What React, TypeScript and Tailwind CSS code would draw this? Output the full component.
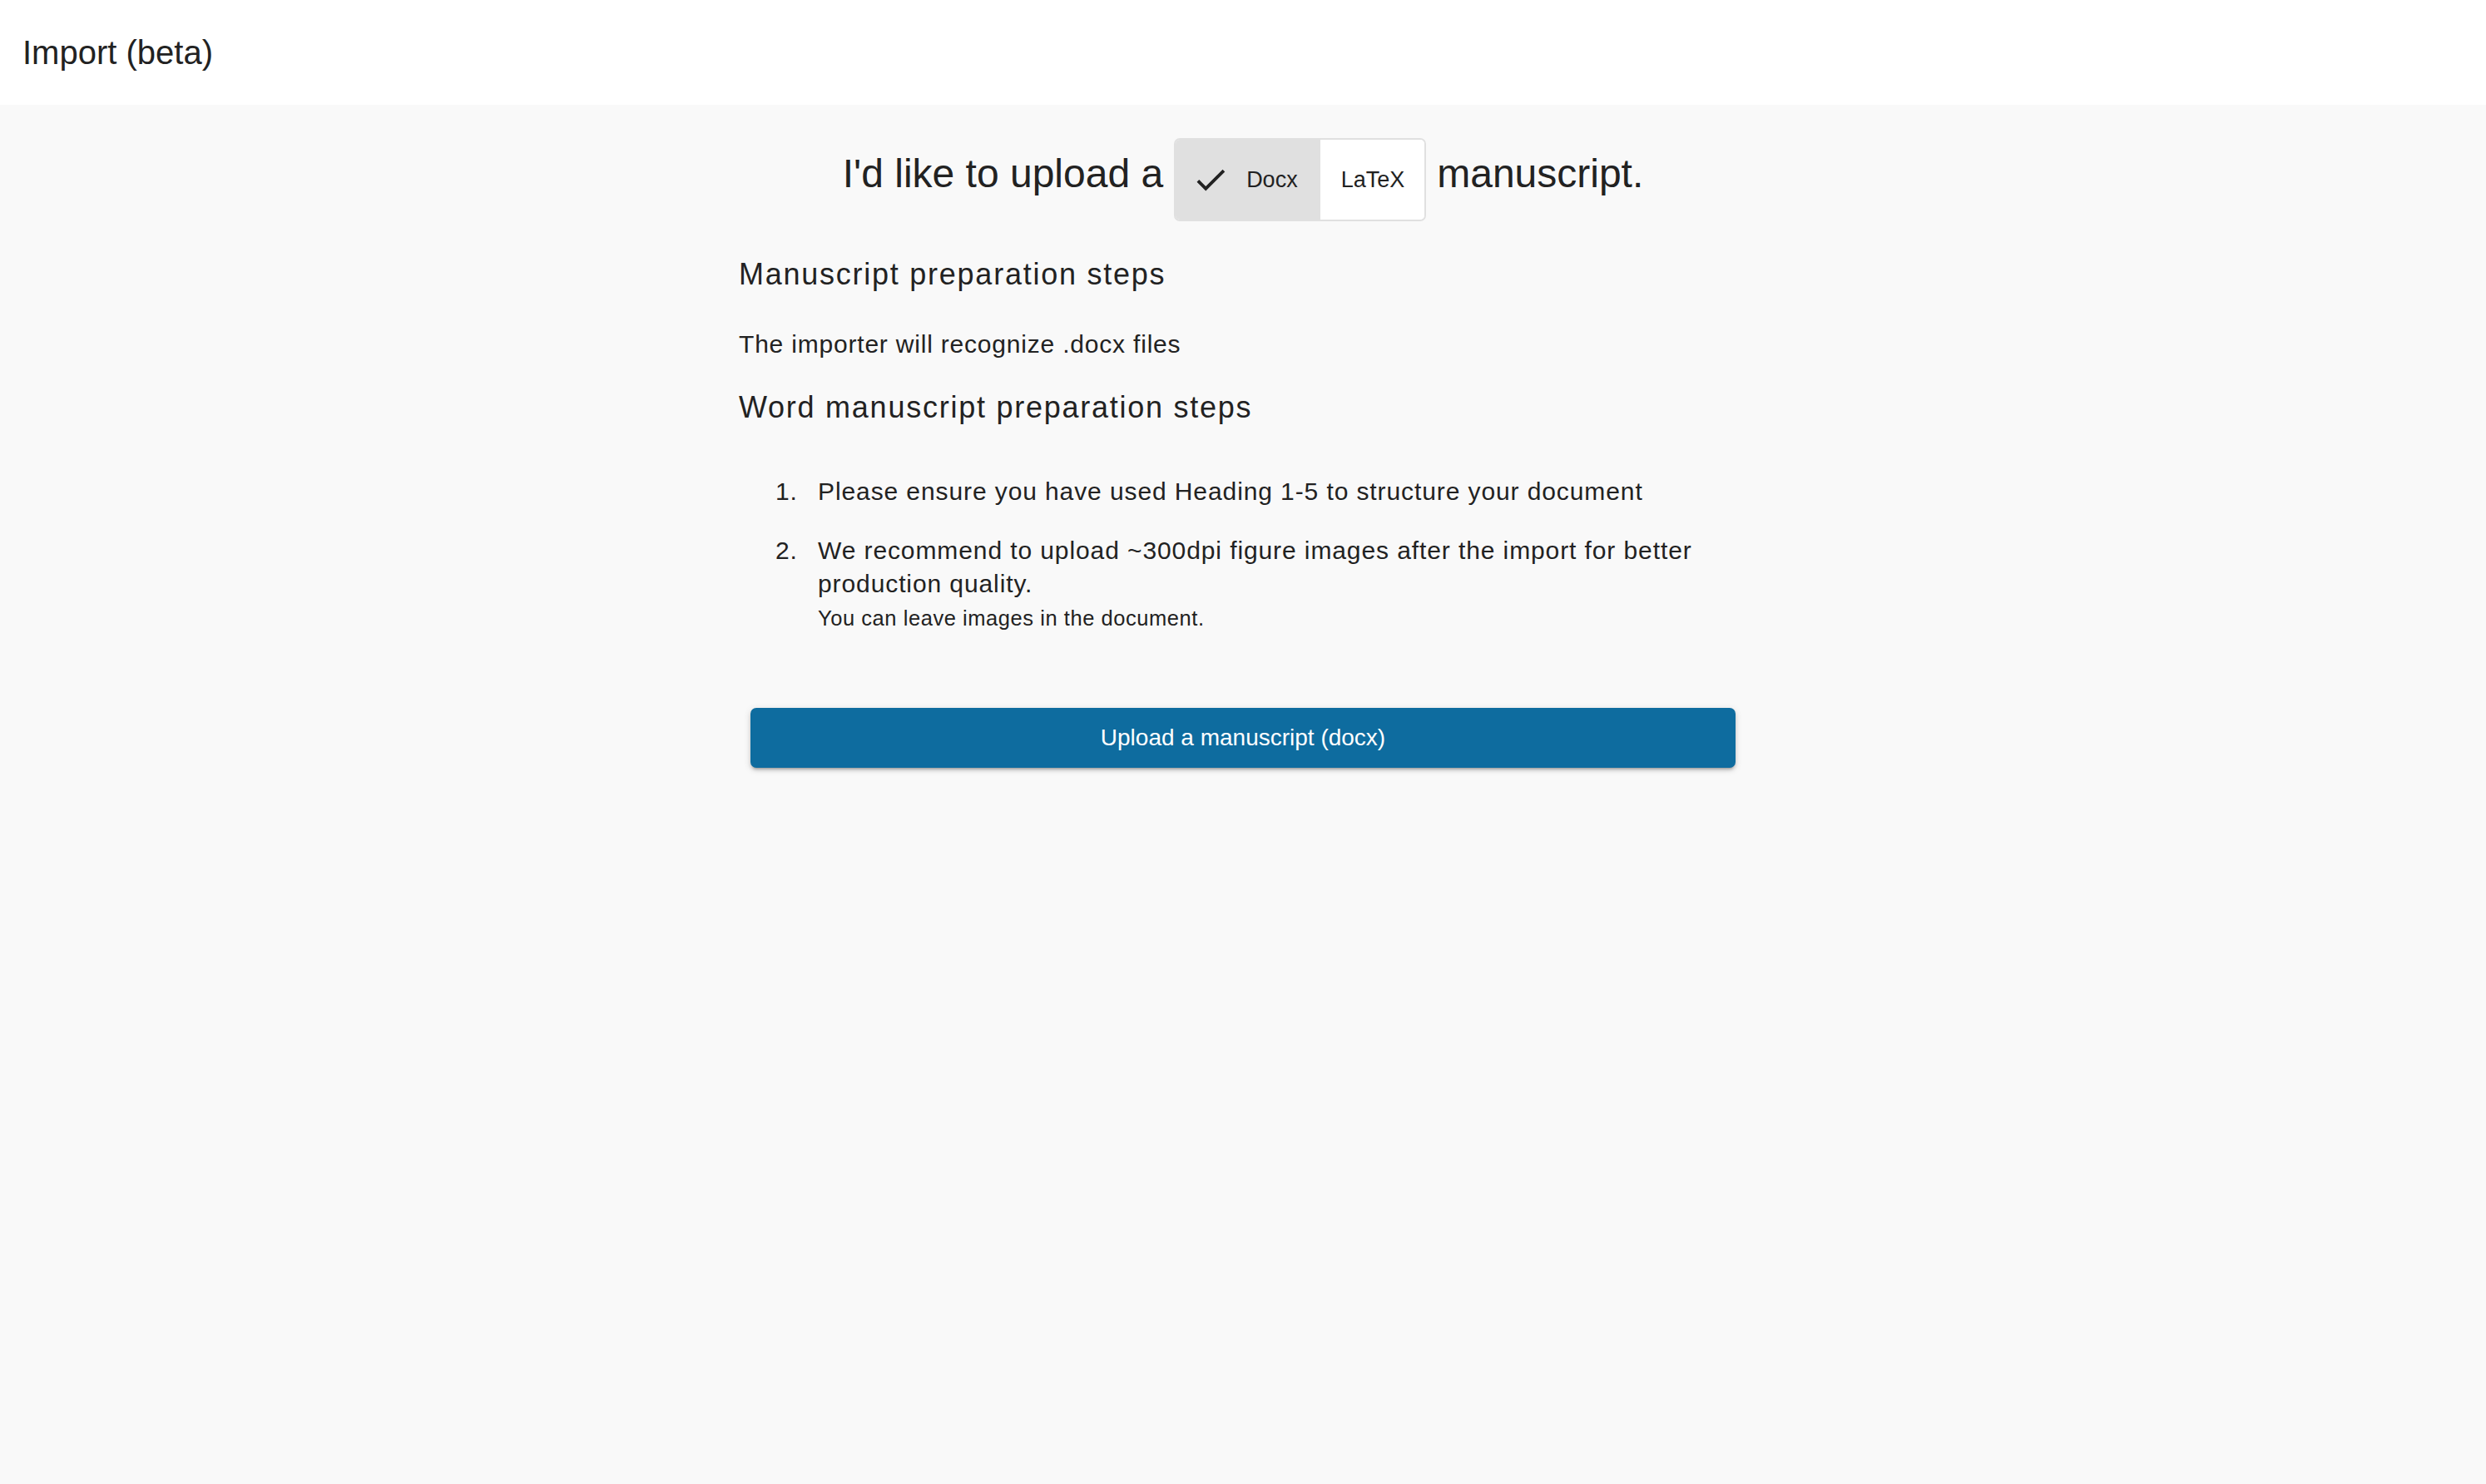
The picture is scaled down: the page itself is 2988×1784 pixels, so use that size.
import { useState } from 'react'

type Format = 'docx' | 'latex'

function CheckIcon() {
  // Material "Check" glyph
  return (
    <svg viewBox="0 0 24 24" className="h-[46px] w-[46px] fill-[#222]" aria-hidden="true">
      <path d="M9 16.17 4.83 12l-1.42 1.41L9 19 21 7l-1.41-1.41z" />
    </svg>
  )
}

const steps = [
  {
    text: 'Please ensure you have used Heading 1-5 to structure your document',
    note: null,
  },
  {
    text: 'We recommend to upload ~300dpi figure images after the import for better production quality.',
    note: 'You can leave images in the document.',
  },
]

export default function App() {
  const [format, setFormat] = useState<Format>('docx')

  return (
    <div className="min-h-screen bg-[#f9f9f9] font-['Liberation_Sans',Arial,sans-serif] text-[#222]">
      {/* Top bar */}
      <header className="flex h-[126px] items-center bg-white pl-[27px]">
        <h1 className="text-[40px] leading-[48px] font-normal">Import (beta)</h1>
      </header>

      <main className="mx-auto w-[1212px] pt-[40px]">
        {/* Format picker sentence */}
        <div className="flex items-start justify-center gap-[13px]">
          <span className="mt-[15px] text-[48px] leading-[56px]">I'd like to upload a</span>
          <div className="flex overflow-hidden rounded-[7px] border-2 border-[#e0e0e0]">
            <button
              onClick={() => setFormat('docx')}
              className={`flex h-[96px] items-center gap-[20px] pl-[19px] pr-[27px] text-[27px] leading-[32px] ${
                format === 'docx' ? 'bg-[#e0e0e0]' : 'bg-white'
              }`}
            >
              {format === 'docx' && <CheckIcon />}
              Docx
            </button>
            <button
              onClick={() => setFormat('latex')}
              className={`flex h-[96px] items-center gap-[20px] pl-[25px] pr-[24px] text-[27px] leading-[32px] ${
                format === 'latex' ? 'bg-[#e0e0e0]' : 'bg-white'
              }`}
            >
              {format === 'latex' && <CheckIcon />}
              LaTeX
            </button>
          </div>
          <span className="mt-[15px] text-[48px] leading-[56px]">manuscript.</span>
        </div>

        <h2 className="mt-[42px] text-[36px] leading-[44px] font-normal tracking-[1.75px]">
          Manuscript preparation steps
        </h2>
        <p className="mt-[42px] text-[30px] leading-[40px] tracking-[0.8px]">
          The importer will recognize .{format === 'docx' ? 'docx' : 'tex'} files
        </p>
        <h2 className="mt-[34px] text-[36px] leading-[44px] font-normal tracking-[1.75px]">
          {format === 'docx' ? 'Word' : 'LaTeX'} manuscript preparation steps
        </h2>

        <ol className="mt-[59px] flex flex-col gap-[31px] pl-[44px] pr-[40px]">
          {steps.map((step, i) => (
            <li key={i} className="flex text-[30px] leading-[40px] tracking-[0.9px]">
              <span className="w-[51px] shrink-0">{i + 1}.</span>
              <div>
                <div>{step.text}</div>
                {step.note && (
                  <div className="mt-[4px] text-[25.5px] leading-[34px] tracking-[0.55px]">{step.note}</div>
                )}
              </div>
            </li>
          ))}
        </ol>

        <div className="mt-[91px] px-[14px]">
          <button className="flex h-[72px] w-full items-center justify-center rounded-[7px] bg-[#0e6c9f] text-[28px] leading-[34px] text-white shadow-[0_4px_3px_-3px_rgba(0,0,0,0.25),0_3px_4px_0_rgba(0,0,0,0.14),0_2px_10px_0_rgba(0,0,0,0.12)]">
            Upload a manuscript ({format === 'docx' ? 'docx' : 'LaTeX'})
          </button>
        </div>
      </main>
    </div>
  )
}
